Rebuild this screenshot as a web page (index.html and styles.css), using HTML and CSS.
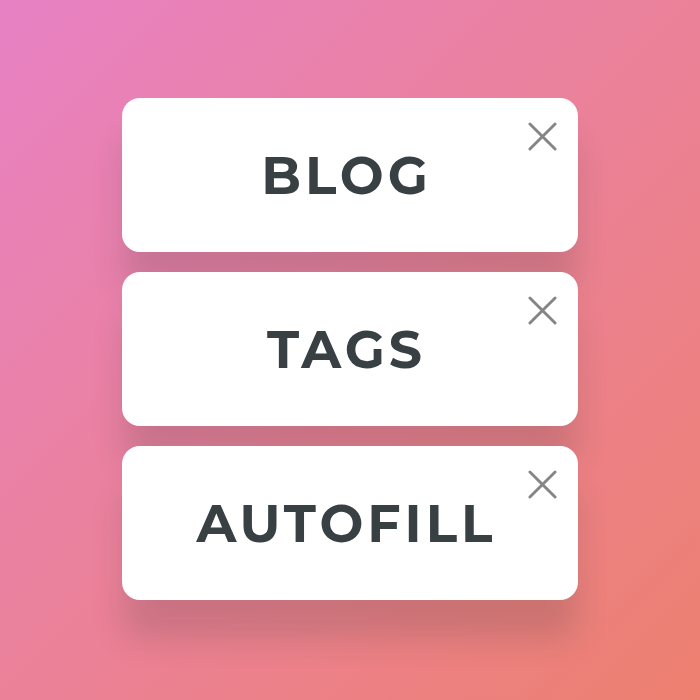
FILE: index.html
```html
<!DOCTYPE html>
<html lang="en">
<head>
<meta charset="utf-8">
<title>Tags</title>
<link rel="stylesheet" href="styles.css">
</head>
<body>
<ul class="tags">
  <li class="tag"><span class="label">BLOG</span><button class="close" type="button" aria-label="Remove Blog"><svg viewBox="0 0 30 30"><path d="M2 2l26 26M28 2l-26 26"/></svg></button></li>
  <li class="tag"><span class="label">TAGS</span><button class="close" type="button" aria-label="Remove Tags"><svg viewBox="0 0 30 30"><path d="M2 2l26 26M28 2l-26 26"/></svg></button></li>
  <li class="tag"><span class="label">AUTOFILL</span><button class="close" type="button" aria-label="Remove Autofill"><svg viewBox="0 0 30 30"><path d="M2 2l26 26M28 2l-26 26"/></svg></button></li>
</ul>
</body>
</html>
```
FILE: styles.css
```css
* {
  box-sizing: border-box;
}

body {
  margin: 0;
  min-height: 100vh;
  padding: 0 20px 2px;
  display: flex;
  align-items: center;
  justify-content: center;
  font-family: Montserrat, "Open Sans", sans-serif;
  background: linear-gradient(135deg, #e881c4 0%, #eb8199 50%, #ed806f 100%);
}

.tags {
  width: 100%;
  max-width: 456px;
  margin: 0;
  padding: 0;
  list-style: none;
  display: grid;
  gap: 20px;
}

.tag {
  position: relative;
  display: flex;
  align-items: center;
  justify-content: center;
  padding: 43px 27px 41px 20px;
  background: #fff;
  border-radius: 18px;
  box-shadow: 0 40px 32px -2px rgba(40, 50, 50, 0.17);
}

.label {
  font-size: 52px;
  line-height: 70px;
  font-weight: 700;
  letter-spacing: 4px;
  color: #384044;
}

.close {
  position: absolute;
  top: 24px;
  right: 21px;
  width: 29px;
  height: 29px;
  padding: 0;
  border: 0;
  background: none;
}

.close svg {
  display: block;
  fill: none;
  stroke: #858585;
  stroke-width: 3;
  stroke-linecap: round;
}
```
